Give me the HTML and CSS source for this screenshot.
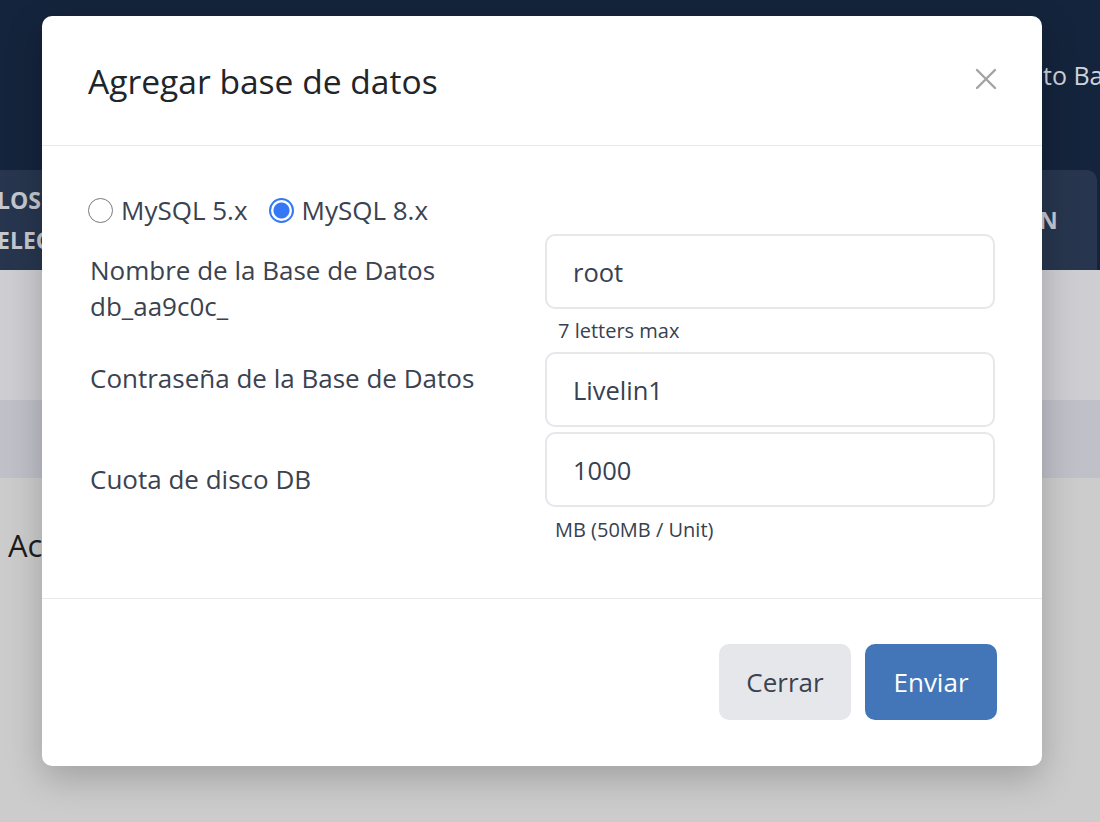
FILE: index.html
```html
<!DOCTYPE html>
<html lang="es">
<head>
<meta charset="utf-8">
<title>Agregar base de datos</title>
<link rel="stylesheet" href="styles.css">
</head>
<body>
<div class="page">
  <header class="topbar">
    <span class="topbar-user">to Base de datos</span>
  </header>
  <nav class="tabs">
    <div class="tab tab-left"><span>LOS</span><span>ELEC</span></div>
    <div class="tab-gap"></div>
    <div class="tab tab-right"><span>N</span></div>
  </nav>
  <div class="band band-light"></div>
  <div class="band band-mid"></div>
  <main class="content">
    <h2 class="content-title">Acciones</h2>
  </main>
</div>

<div class="modal">
  <div class="modal-header">
    <h1 class="modal-title">Agregar base de datos</h1>
    <button class="modal-close" aria-label="Cerrar">
      <svg width="22" height="22" viewBox="0 0 22 22"><path d="M2 2 L20 20 M20 2 L2 20" stroke="#a3a3a3" stroke-width="2.4" stroke-linecap="round" fill="none"/></svg>
    </button>
  </div>
  <div class="modal-body">
    <div class="radio-row">
      <label class="radio"><input type="radio" name="ver"><span>MySQL 5.x</span></label>
      <label class="radio"><input type="radio" name="ver" checked><span>MySQL 8.x</span></label>
    </div>
    <div class="form-grid">
      <div class="field-label field-label-1">Nombre de la Base de Datos<br>db_aa9c0c_</div>
      <div class="field">
        <input class="text-input" type="text" value="root">
        <div class="help help-1">7 letters max</div>
      </div>
      <div class="field-label field-label-2">Contraseña de la Base de Datos</div>
      <div class="field field-2">
        <input class="text-input" type="text" value="Livelin1">
      </div>
      <div class="field-label field-label-3">Cuota de disco DB</div>
      <div class="field field-3">
        <input class="text-input" type="text" value="1000">
        <div class="help help-2">MB (50MB / Unit)</div>
      </div>
    </div>
  </div>
  <div class="modal-footer">
    <button class="btn btn-secondary">Cerrar</button>
    <button class="btn btn-primary">Enviar</button>
  </div>
</div>
</body>
</html>
```
FILE: styles.css
```css
* { box-sizing: border-box; }
html, body {
  margin: 0;
  padding: 0;
  overflow: hidden;
  height: 822px;
}
body {
  font-family: "Open Sans", "Noto Sans", sans-serif;
  background: #cccccc;
  position: relative;
}
.page {
  width: 1100px;
  height: 822px;
  overflow: hidden;
}
.topbar {
  height: 170px;
  background: #14243c;
  display: flex;
  align-items: center;
  padding-left: 1043px;
  padding-bottom: 20px;
  white-space: nowrap;
}
.topbar-user {
  color: #cfd3da;
  font-size: 25px;
}
.tabs {
  height: 100px;
  background: #14243c;
  display: flex;
}
.tab {
  background: #27364e;
  color: #c3c8d1;
  font-weight: 700;
  font-size: 23px;
  display: flex;
  flex-direction: column;
  justify-content: center;
  white-space: nowrap;
}
.tab-left {
  width: 300px;
  margin-left: -3px;
  line-height: 40px;
  border-top-right-radius: 10px;
}
.tab-gap { flex: 1; }
.tab-right {
  width: 300px;
  margin-right: 3px;
  padding-left: 242px;
  border-top-left-radius: 10px;
  border-top-right-radius: 10px;
  font-size: 23px;
}
.band-light {
  height: 130px;
  background: #cdcdd2;
}
.band-mid {
  height: 78px;
  background: #bfc0c8;
}
.content {
  padding: 46px 8px 0;
}
.content-title {
  margin: 0;
  font-weight: 400;
  font-size: 31px;
  color: #1c1c1c;
}

/* Modal */
.modal {
  position: absolute;
  left: 42px;
  top: 16px;
  width: 1000px;
  height: 750px;
  background: #ffffff;
  border-radius: 10px;
  box-shadow: 0 12px 36px rgba(0, 0, 0, 0.22);
  display: flex;
  flex-direction: column;
}
.modal-header {
  height: 130px;
  border-bottom: 1px solid #e8e9ec;
  display: flex;
  align-items: center;
  justify-content: space-between;
  padding: 0 45px 0 46px;
}
.modal-title {
  margin: 0;
  font-size: 33.6px;
  font-weight: 400;
  color: #212529;
}
.modal-close {
  border: 0;
  background: none;
  padding: 0;
  width: 22px;
  height: 22px;
  display: flex;
  margin-top: -4px;
}
.modal-body {
  height: 453px;
  border-bottom: 1px solid #e8e9ec;
  padding: 48px 47px 0 46px;
}
.radio-row {
  display: flex;
  gap: 21px;
  height: 32px;
  align-items: center;
}
.radio {
  display: flex;
  align-items: center;
  gap: 8px;
  font-size: 26px;
  color: #3b4250;
}
.radio input {
  appearance: none;
  -webkit-appearance: none;
  margin: 0;
  width: 25px;
  height: 25px;
  border: 1.5px solid #7a7a7a;
  border-radius: 50%;
  background: #fff;
}
.radio input:checked {
  border: 2px solid #3478f6;
  background: radial-gradient(circle, #3478f6 0 7.5px, #ffffff 8.5px);
}
.form-grid {
  display: grid;
  grid-template-columns: 457px 450px;
  margin-top: 8px;
}
.field-label {
  font-size: 26px;
  line-height: 36px;
  color: #3b4250;
  padding-left: 2px;
}
.field-label-1 { padding-top: 18px; }
.field-label-2 { padding-top: 17px; }
.field-label-3 { padding-top: 34px; }
.field-2 { margin-top: 9px; }
.field-3 { margin-top: 5px; }
.text-input {
  display: block;
  width: 450px;
  height: 75px;
  border: 2px solid #e5e7eb;
  border-radius: 10px;
  padding: 0 26px;
  font-family: inherit;
  font-size: 25.5px;
  color: #374151;
  outline: none;
  background: #fff;
}
.help {
  font-size: 20px;
  line-height: 24px;
  color: #374151;
}
.help-1 { margin-top: 10px; padding-left: 13px; }
.help-2 { margin-top: 11px; padding-left: 10px; }

.modal-footer {
  flex: 1;
  display: flex;
  justify-content: flex-end;
  align-items: flex-start;
  gap: 14px;
  padding: 45px 45px 0 0;
}
.btn {
  width: 132px;
  height: 76px;
  border: 0;
  border-radius: 10px;
  font-family: inherit;
  font-size: 26px;
}
.btn-secondary {
  background: #e5e7eb;
  color: #3b4250;
}
.btn-primary {
  background: #4276b8;
  color: #ffffff;
}
```
